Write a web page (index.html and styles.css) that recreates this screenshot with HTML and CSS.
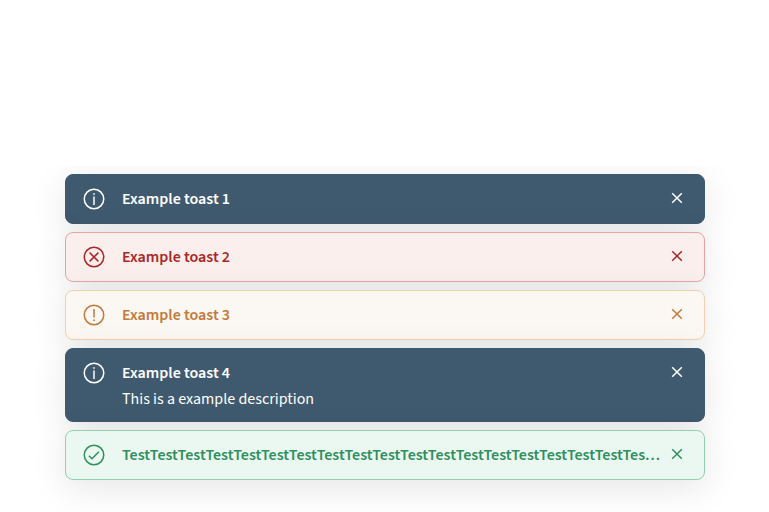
FILE: index.html
```
<!DOCTYPE html>
<html lang="en">
<head>
<meta charset="utf-8">
<title>Toasts</title>
<link rel="stylesheet" href="styles.css">
</head>
<body>
<svg class="sprite" aria-hidden="true">
  <symbol id="close" viewBox="0 0 16 16"><path d="M3.2 3.2l9.6 9.6M12.8 3.2l-9.6 9.6"/></symbol>
  <symbol id="info" viewBox="0 0 24 24"><circle cx="12" cy="12" r="9.75"/><path d="M12 9.5v8.4"/><path class="dot" d="M11.2 6.2h1.6v1.6h-1.6z"/></symbol>
  <symbol id="error" viewBox="0 0 24 24"><circle cx="12" cy="12" r="9.75"/><path d="M7.6 7.6l8.8 8.8M16.4 7.6l-8.8 8.8"/></symbol>
  <symbol id="warning" viewBox="0 0 24 24"><circle cx="12" cy="12" r="9.75"/><path d="M12 6v8.5"/><path class="dot" d="M11.2 16.4h1.6v1.6h-1.6z"/></symbol>
  <symbol id="success" viewBox="0 0 24 24"><circle cx="12" cy="12" r="9.75"/><path d="M6.9 12.7l3.1 3.1 6.9-7"/></symbol>
</svg>
<main class="toasts">
  <div class="toast neutral">
    <svg class="icon"><use href="#info"/></svg>
    <div class="content"><div class="title">Example toast 1</div></div>
    <button class="close" aria-label="Close"><svg><use href="#close"/></svg></button>
  </div>
  <div class="toast error">
    <svg class="icon"><use href="#error"/></svg>
    <div class="content"><div class="title">Example toast 2</div></div>
    <button class="close" aria-label="Close"><svg><use href="#close"/></svg></button>
  </div>
  <div class="toast warning">
    <svg class="icon"><use href="#warning"/></svg>
    <div class="content"><div class="title">Example toast 3</div></div>
    <button class="close" aria-label="Close"><svg><use href="#close"/></svg></button>
  </div>
  <div class="toast neutral">
    <svg class="icon"><use href="#info"/></svg>
    <div class="content"><div class="title">Example toast 4</div><div class="description">This is a example description</div></div>
    <button class="close" aria-label="Close"><svg><use href="#close"/></svg></button>
  </div>
  <div class="toast success">
    <svg class="icon"><use href="#success"/></svg>
    <div class="content"><div class="title">TestTestTestTestTestTestTestTestTestTestTestTestTestTestTestTestTestTestTestTestTestTestTestTest</div></div>
    <button class="close" aria-label="Close"><svg><use href="#close"/></svg></button>
  </div>
</main>
</body>
</html>
```
FILE: styles.css
```
* { box-sizing: border-box; }
body {
  margin: 0;
  height: 512px;
  display: flex;
  flex-direction: column;
  justify-content: flex-end;
  overflow: hidden;
  background: #fff;
  font-family: "Source Sans 3", "Source Sans Pro", "Noto Sans CJK SC", sans-serif;
}
.sprite { position: absolute; width: 0; height: 0; }
.toasts {
  display: flex;
  flex-direction: column;
  gap: 8px;
  padding: 8px 64px 32px 65px;
  overflow: hidden;
}
.toast {
  display: flex;
  align-items: flex-start;
  min-height: 50px;
  padding: 11px 19px 11px 16px;
  border: 1px solid;
  border-radius: 8px;
  box-shadow: 0 8px 36px rgba(0, 0, 0, 0.1);
}
.neutral { background: #3f596e; border-color: #3f596e; color: #fff; }
.error { background: #fbefed; border-color: #e9a3a3; color: #ab2727; }
.warning { background: #fbf7f2; border-color: #f3cfac; color: #c27a3b; }
.success { background: #ebf8f1; border-color: #92d0ae; color: #2f8f5d; }
.icon {
  flex: none;
  width: 24px;
  height: 24px;
  margin-top: 1px;
  fill: none;
  stroke: currentColor;
  stroke-width: 1.5;
}
.dot { fill: currentColor; stroke: none; }
.content { flex: 1; min-width: 0; margin-left: 16px; }
.title, .description { height: 26px; line-height: 26px; white-space: nowrap; }
.title {
  overflow: hidden;
  text-overflow: ellipsis;
  font-size: 16px;
  font-weight: 600;
}
.description { height: 24px; font-size: 16px; }
.close {
  flex: none;
  width: 16px;
  height: 16px;
  margin: 4px 0 0 8px;
  padding: 0;
  border: 0;
  background: none;
  color: inherit;
}
.close svg {
  display: block;
  width: 16px;
  height: 16px;
  fill: none;
  stroke: currentColor;
  stroke-width: 1.5;
}
```
